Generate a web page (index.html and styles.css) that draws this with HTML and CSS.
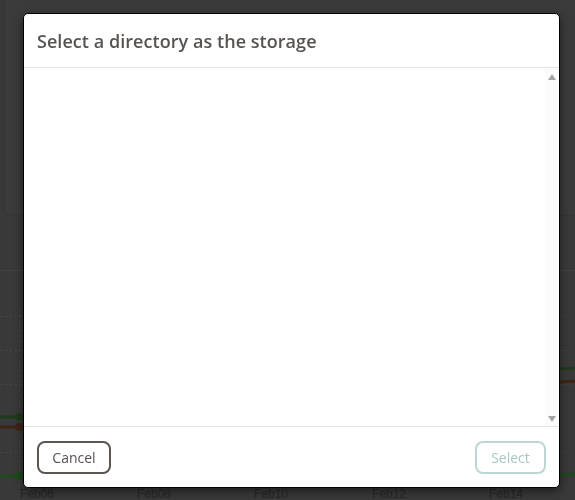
FILE: index.html
```html
<!DOCTYPE html>
<html>
<head>
<meta charset="utf-8">
<link rel="stylesheet" href="styles.css">
</head>
<body>
<div class="page">
  <svg class="chart" width="575" height="500" viewBox="0 0 575 500">
    <rect x="4" y="-10" width="600" height="225" rx="6" fill="#3b3b3b" stroke="#343434"/>
    <line x1="0" y1="270.5" x2="575" y2="270.5" stroke="#434343"/>
    <g stroke="#464646" stroke-dasharray="2 3">
      <line x1="0" y1="316.5" x2="575" y2="316.5"/>
      <line x1="0" y1="350.5" x2="575" y2="350.5"/>
      <line x1="0" y1="384.5" x2="575" y2="384.5"/>
      <line x1="0" y1="452.5" x2="575" y2="452.5"/>
      <line x1="19.5" y1="310" x2="19.5" y2="487"/>
    </g>
    <polyline points="0,417 19,417 560,369 575,368" fill="none" stroke="#1f3a1c" stroke-width="3"/>
    <polyline points="0,427 19,427 560,382 575,381" fill="none" stroke="#3e2418" stroke-width="3"/>
    <polyline points="0,476 19,476 560,475 575,474" fill="none" stroke="#1e4a1c" stroke-width="3"/>
    <circle cx="19" cy="417" r="4" fill="#1f3a1c"/>
    <circle cx="19" cy="427" r="4" fill="#3e2418"/>
    <circle cx="19" cy="476" r="4" fill="#1e4a1c"/>
    <g fill="#262626" font-family="Liberation Sans, sans-serif" font-size="12">
      <text x="20" y="498">Feb06</text>
      <text x="137" y="498">Feb08</text>
      <text x="254" y="498">Feb10</text>
      <text x="372" y="498">Feb12</text>
      <text x="489" y="498">Feb14</text>
    </g>
  </svg>
</div>
<div class="overlay">
  <div class="modal">
    <div class="modal-header">
      <h2 class="modal-title">Select a directory as the storage</h2>
    </div>
    <div class="modal-body">
      <div class="tree"></div>
      <div class="scrollbar">
        <span class="arrow up"></span>
        <span class="arrow down"></span>
      </div>
    </div>
    <div class="modal-footer">
      <button class="btn btn-cancel">Cancel</button>
      <button class="btn btn-select" disabled>Select</button>
    </div>
  </div>
</div>
</body>
</html>
```
FILE: styles.css
```css
html, body {
  margin: 0;
  padding: 0;
  width: 575px;
  height: 500px;
  overflow: hidden;
  background: #393939;
  font-family: "Open Sans", "Noto Sans", sans-serif;
}
.page {
  width: 575px;
  height: 500px;
}
.chart {
  display: block;
}
.overlay {
  position: fixed;
  inset: 0;
  padding: 13px 0 0 23px;
  box-sizing: border-box;
}
.modal {
  width: 537px;
  height: 475px;
  box-sizing: border-box;
  background: #fff;
  border: 1px solid #000;
  border-radius: 5px;
  box-shadow: 0 3px 10px rgba(0,0,0,0.5);
  display: flex;
  flex-direction: column;
  overflow: hidden;
}
.modal-header {
  height: 54px;
  box-sizing: border-box;
  border-bottom: 1px solid #e3e3e3;
  display: flex;
  align-items: center;
  padding: 0 13px;
}
.modal-title {
  margin: 0;
  font-family: "Open Sans", sans-serif;
  font-weight: 600;
  font-size: 18px;
  color: #58534f;
  letter-spacing: 0.05px;
}
.modal-body {
  flex: 1;
  display: flex;
  border-bottom: 1px solid #e3e3e3;
}
.tree {
  flex: 1;
}
.scrollbar {
  width: 13px;
  margin-right: 1px;
  background: #fbfbfb;
  display: flex;
  flex-direction: column;
  justify-content: space-between;
  align-items: center;
  padding: 4px 0 4px;
}
.arrow {
  width: 0;
  height: 0;
  border-left: 4px solid transparent;
  border-right: 4px solid transparent;
}
.arrow.up {
  border-bottom: 6px solid #a3a3a3;
  margin-top: 2px;
}
.arrow.down {
  border-top: 6px solid #a3a3a3;
}
.modal-footer {
  height: 60px;
  display: flex;
  justify-content: space-between;
  align-items: center;
  padding: 0 13px 0 13px;
  box-sizing: border-box;
}
.btn {
  height: 33px;
  box-sizing: border-box;
  border-radius: 8px;
  background: #fff;
  font-size: 14px;
  font-family: "Open Sans", sans-serif;
  padding: 0;
}
.btn-cancel {
  width: 74px;
  border: 2px solid #5c5652;
  color: #57524f;
}
.btn-select {
  width: 71px;
  border: 2px solid #bcd6d4;
  color: #a9c7c5;
}
```
